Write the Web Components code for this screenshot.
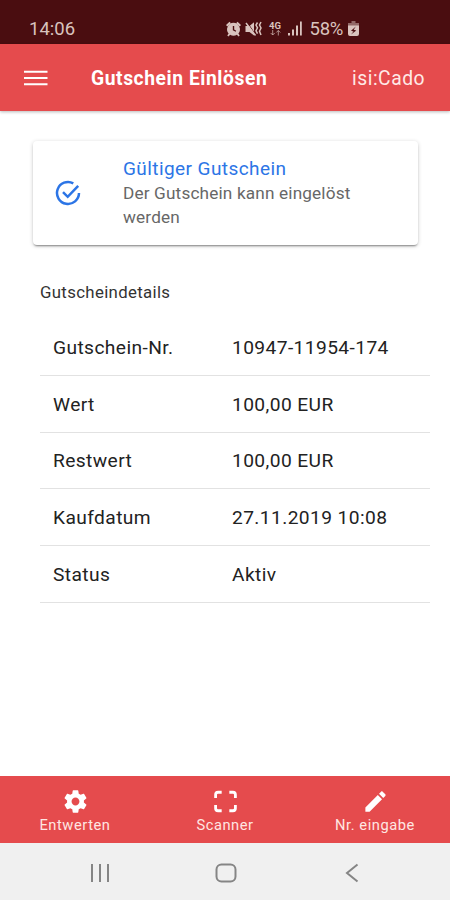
<!DOCTYPE html>
<html lang="de">
<head>
<meta charset="utf-8">
<meta name="viewport" content="width=device-width, initial-scale=1">
<title>Gutschein Einlösen</title>
<style>
    html, body {
        margin: 0;
        height: 100%;
    }

    body {
        --primary: #e54b4d;
        --accent: #2c75e6;
        font-family: Roboto, "Noto Sans", sans-serif;
        background: #fff;
        overflow: hidden;
    }
</style>
</head>
<body>
<voucher-app>
    <status-bar slot="status" time="14:06" battery="58%"></status-bar>
    <app-bar slot="header">Gutschein Einlösen<span slot="brand">isi:Cado</span></app-bar>

    <notice-card>
        <span slot="title">Gültiger Gutschein</span>
        Der Gutschein kann eingelöst werden
    </notice-card>
    <detail-list>
        <span slot="heading">Gutscheindetails</span>
        <detail-row label="Gutschein-Nr.">10947-11954-174</detail-row>
        <detail-row label="Wert">100,00 EUR</detail-row>
        <detail-row label="Restwert">100,00 EUR</detail-row>
        <detail-row label="Kaufdatum">27.11.2019 10:08</detail-row>
        <detail-row label="Status">Aktiv</detail-row>
    </detail-list>

    <tab-bar slot="footer">
        <tab-item icon="gear">Entwerten</tab-item>
        <tab-item icon="scan">Scanner</tab-item>
        <tab-item icon="pencil">Nr. eingabe</tab-item>
    </tab-bar>
    <system-nav slot="footer"></system-nav>
</voucher-app>

<script>
const ICONS = {
    gear: '<path d="M19.43 12.98c.04-.32.07-.64.07-.98s-.03-.66-.07-.98l2.11-1.65c.19-.15.24-.42.12-.64l-2-3.46c-.12-.22-.39-.3-.61-.22l-2.49 1c-.52-.4-1.08-.73-1.69-.98l-.38-2.65C14.46 2.18 14.25 2 14 2h-4c-.25 0-.46.18-.49.42l-.38 2.65c-.61.25-1.17.59-1.69.98l-2.49-1c-.23-.09-.49 0-.61.22l-2 3.46c-.13.22-.07.49.12.64l2.11 1.65c-.04.32-.07.65-.07.98s.03.66.07.98l-2.11 1.65c-.19.15-.24.42-.12.64l2 3.46c.12.22.39.3.61.22l2.49-1c.52.4 1.08.73 1.69.98l.38 2.65c.03.24.24.42.49.42h4c.25 0 .46-.18.49-.42l.38-2.65c.61-.25 1.17-.59 1.69-.98l2.49 1c.23.09.49 0 .61-.22l2-3.46c.12-.22.07-.49-.12-.64l-2.11-1.65zM12 15.5c-1.93 0-3.5-1.57-3.5-3.5s1.57-3.5 3.5-3.5 3.5 1.57 3.5 3.5-1.57 3.5-3.5 3.5z"/>',
    scan: '<path d="M3.2 8.8V6Q3.2 3.8 5.4 3.8H8.6M15.4 3.8h3.2q2.2 0 2.2 2.2v2.8M20.8 15.2V18q0 2.2-2.2 2.2h-3.2M8.6 20.2H5.4q-2.2 0-2.2-2.2v-2.8" fill="none" stroke="currentColor" stroke-width="2.5"/>',
    pencil: '<path d="M3 17.25V21h3.75L17.81 9.94l-3.75-3.75L3 17.25zM20.71 7.04c.39-.39.39-1.02 0-1.41l-2.34-2.34c-.39-.39-1.02-.39-1.41 0l-1.83 1.83 3.75 3.75 1.83-1.83z"/>'
};

class BaseElement extends HTMLElement {
    connectedCallback() {
        if (this.shadowRoot) return;
        this.attachShadow({ mode: 'open' }).innerHTML = this.template();
    }
}

class VoucherApp extends BaseElement {
    template() {
        return `
      <style>
        :host {
          display: flex;
          flex-direction: column;
          height: 100vh;
        }

        main {
          flex: 1;
          min-height: 0;
        }
      </style>
      <slot name="status"></slot>
      <slot name="header"></slot>
      <main><slot></slot></main>
      <slot name="footer"></slot>
    `;
    }
}

class StatusBar extends BaseElement {
    template() {
        return `
      <style>
        :host {
          display: flex;
          align-items: center;
          height: 44px;
          box-sizing: border-box;
          padding: 13px 91px 0 29px;
          background: #4a0d10;
          color: #d9c3be;
          font-size: 18.5px;
          line-height: 22px;
        }

        .time { flex: 1; }
        .battery { margin: 0 5px 0 8px; letter-spacing: -.3px; }

        svg {
          display: block;
          fill: currentColor;
        }

        .net {
          display: grid;
          justify-items: center;
          width: 13px;
          margin: 0 6px 0 7px;
        }

        .net span {
          font-size: 9.5px;
          font-weight: 700;
          line-height: 8px;
        }
      </style>
      <span class="time">${this.getAttribute('time')}</span>
      <svg width="17" height="16" viewBox="0 0 17 16">
        <path d="M1 4 4.5.8l1.4 1.4L2.3 5.5zM16 4 12.5.8l-1.4 1.4 3.6 3.3z"/>
        <path fill-rule="evenodd" d="M8.5 1.8a6.6 6.6 0 0 1 4.9 10.8l1.3 1.8-1.2 1-1.6-1.6a6.6 6.6 0 0 1-6.8 0l-1.6 1.6-1.2-1 1.3-1.8A6.6 6.6 0 0 1 8.5 1.8zM7.8 5v4.2l2.8 1.6.6-1.1-2-1.2V5z"/>
      </svg>
      <svg width="17" height="16" viewBox="0 0 17 16" style="margin-left: 3px">
        <path d="M.5 5h4L9 1.2v13.2L4.5 11h-4z"/>
        <path d="m2 1 9 13.5" stroke="#4a0d10" stroke-width="1"/>
        <path d="m1 2 9.5 12.5M12.5 1.5 11 4l1.5 2.8L11 9.7l1.5 3M16 1l-1.5 3L16 7l-1.5 3.2L16 14" fill="none" stroke="currentColor" stroke-width="1.5"/>
      </svg>
      <span class="net">
        <span>4G</span>
        <svg width="11" height="6" viewBox="0 0 11 6"><path d="M2.7 0v5M.7 3l2 2 2-2M8.3 5.5v-5M6.3 2.5l2-2 2 2" fill="none" stroke="currentColor" stroke-width="1" opacity=".7"/></svg>
      </span>
      <svg width="14" height="15" viewBox="0 0 14 15">
        <path d="M0 12h2v2.5H0zM4 8.5h2v6H4zM8 4.5h2v10H8zM12 .5h1.8v14H12z"/>
      </svg>
      <span class="battery">${this.getAttribute('battery')}</span>
      <svg width="11" height="15" viewBox="0 0 11 15">
        <path d="M3.5 0h4v2H11v3H0V2h3.5z" opacity=".5"/>
        <path fill-rule="evenodd" d="M0 4.5h11V13q0 2-2 2H2q-2 0-2-2zM7.8 5.5 3 9.8l2.5.6L3 13.5l5.3-4-2.6-.7z"/>
      </svg>
    `;
    }
}

class AppBar extends BaseElement {
    template() {
        return `
      <style>
        :host {
          display: flex;
          align-items: center;
          height: 67px;
          box-sizing: border-box;
          padding: 0 25px 0 24px;
          background: var(--primary);
          color: #fff;
          font-size: 19.3px;
          box-shadow: 0 1px 3px rgba(0, 0, 0, .28);
        }

        svg { margin-right: 43px; }
        span { padding-top: 2px; }
        .title { flex: 1; font-weight: 700; letter-spacing: .56px; }
        .brand { color: #ffe9e6; letter-spacing: .5px; }
      </style>
      <svg width="24" height="16" viewBox="0 0 24 16">
        <path d="M0 1.7h23.5M0 8h23.5M0 14.3h23.5" stroke="#fff" stroke-width="2"/>
      </svg>
      <span class="title"><slot></slot></span>
      <span class="brand"><slot name="brand"></slot></span>
    `;
    }
}

class NoticeCard extends BaseElement {
    template() {
        return `
      <style>
        :host {
          display: flex;
          align-items: center;
          height: 104px;
          box-sizing: border-box;
          margin: 30px 32px 0 33px;
          padding: 0 40px 0 22px;
          border-radius: 4px;
          background: #fff;
          box-shadow: 0 2px 2px -1px rgba(0, 0, 0, .4), 0 1px 4px rgba(0, 0, 0, .2);
        }

        svg {
          flex: none;
          margin-right: 42px;
          fill: none;
          stroke: var(--accent);
          stroke-width: 2.5;
        }

        .title {
          color: var(--accent);
          font-size: 19px;
          line-height: 24px;
          letter-spacing: .42px;
        }

        .text {
          color: #676767;
          font-size: 17.2px;
          line-height: 24px;
          letter-spacing: .16px;
        }
      </style>
      <svg width="26" height="26" viewBox="0 0 26 26">
        <path d="M18.3 3.3A11 11 0 1 0 24 13M8 12.2l4.7 4.6L23.2 5.8"/>
      </svg>
      <div>
        <div class="title"><slot name="title"></slot></div>
        <div class="text"><slot></slot></div>
      </div>
    `;
    }
}

class DetailList extends BaseElement {
    template() {
        return `
      <style>
        :host {
          display: block;
          margin: 37px 20px 0 40px;
        }

        .heading {
          height: 37px;
          color: #333;
          font-size: 16.8px;
          line-height: 20px;
          letter-spacing: .34px;
        }
      </style>
      <div class="heading"><slot name="heading"></slot></div>
      <slot></slot>
    `;
    }
}

class DetailRow extends BaseElement {
    template() {
        return `
      <style>
        :host {
          display: grid;
          grid-template-columns: 179px 1fr;
          align-items: center;
          height: 56.8px;
          box-sizing: border-box;
          padding: 1px 0 0 13px;
          border-bottom: 1.5px solid #e2e2e2;
          color: #222;
          font-size: 19.2px;
          letter-spacing: .4px;
        }
      </style>
      <span>${this.getAttribute('label')}</span>
      <span class="value"><slot></slot></span>
    `;
    }
}

class TabBar extends BaseElement {
    template() {
        return `
      <style>
        :host {
          display: grid;
          grid-template-columns: repeat(3, 1fr);
          height: 67px;
          background: var(--primary);
        }
      </style>
      <slot></slot>
    `;
    }
}

class TabItem extends BaseElement {
    template() {
        return `
      <style>
        :host {
          display: flex;
          flex-direction: column;
          align-items: center;
          padding-top: 12px;
          color: #fff;
          font-size: 14.7px;
          line-height: 18px;
          letter-spacing: .55px;
        }

        svg { fill: currentColor; margin-bottom: 1px; }
        span { color: #ffe6e2; }
      </style>
      <svg width="27" height="27" viewBox="0 0 24 24">${ICONS[this.getAttribute('icon')]}</svg>
      <span><slot></slot></span>
    `;
    }
}

class SystemNav extends BaseElement {
    template() {
        return `
      <style>
        :host {
          display: grid;
          grid-template-columns: repeat(3, 126px);
          justify-content: center;
          align-items: center;
          justify-items: center;
          height: 57px;
          box-sizing: border-box;
          padding: 2px 0 0 2px;
          background: #f0f0f0;
        }

        svg { fill: none; stroke: #858585; stroke-width: 2; }
      </style>
      <svg width="20" height="20" viewBox="0 0 20 20"><path d="M2 1v18M10 1v18M18 1v18"/></svg>
      <svg width="22" height="20" viewBox="0 0 22 20"><rect x="1.5" y="1.5" width="19" height="17" rx="5"/></svg>
      <svg width="14" height="20" viewBox="0 0 14 20"><path d="M12.5 1.5 2 10l10.5 8.5"/></svg>
    `;
    }
}

customElements.define('voucher-app', VoucherApp);
customElements.define('status-bar', StatusBar);
customElements.define('app-bar', AppBar);
customElements.define('notice-card', NoticeCard);
customElements.define('detail-list', DetailList);
customElements.define('detail-row', DetailRow);
customElements.define('tab-bar', TabBar);
customElements.define('tab-item', TabItem);
customElements.define('system-nav', SystemNav);
</script>
</body>
</html>
